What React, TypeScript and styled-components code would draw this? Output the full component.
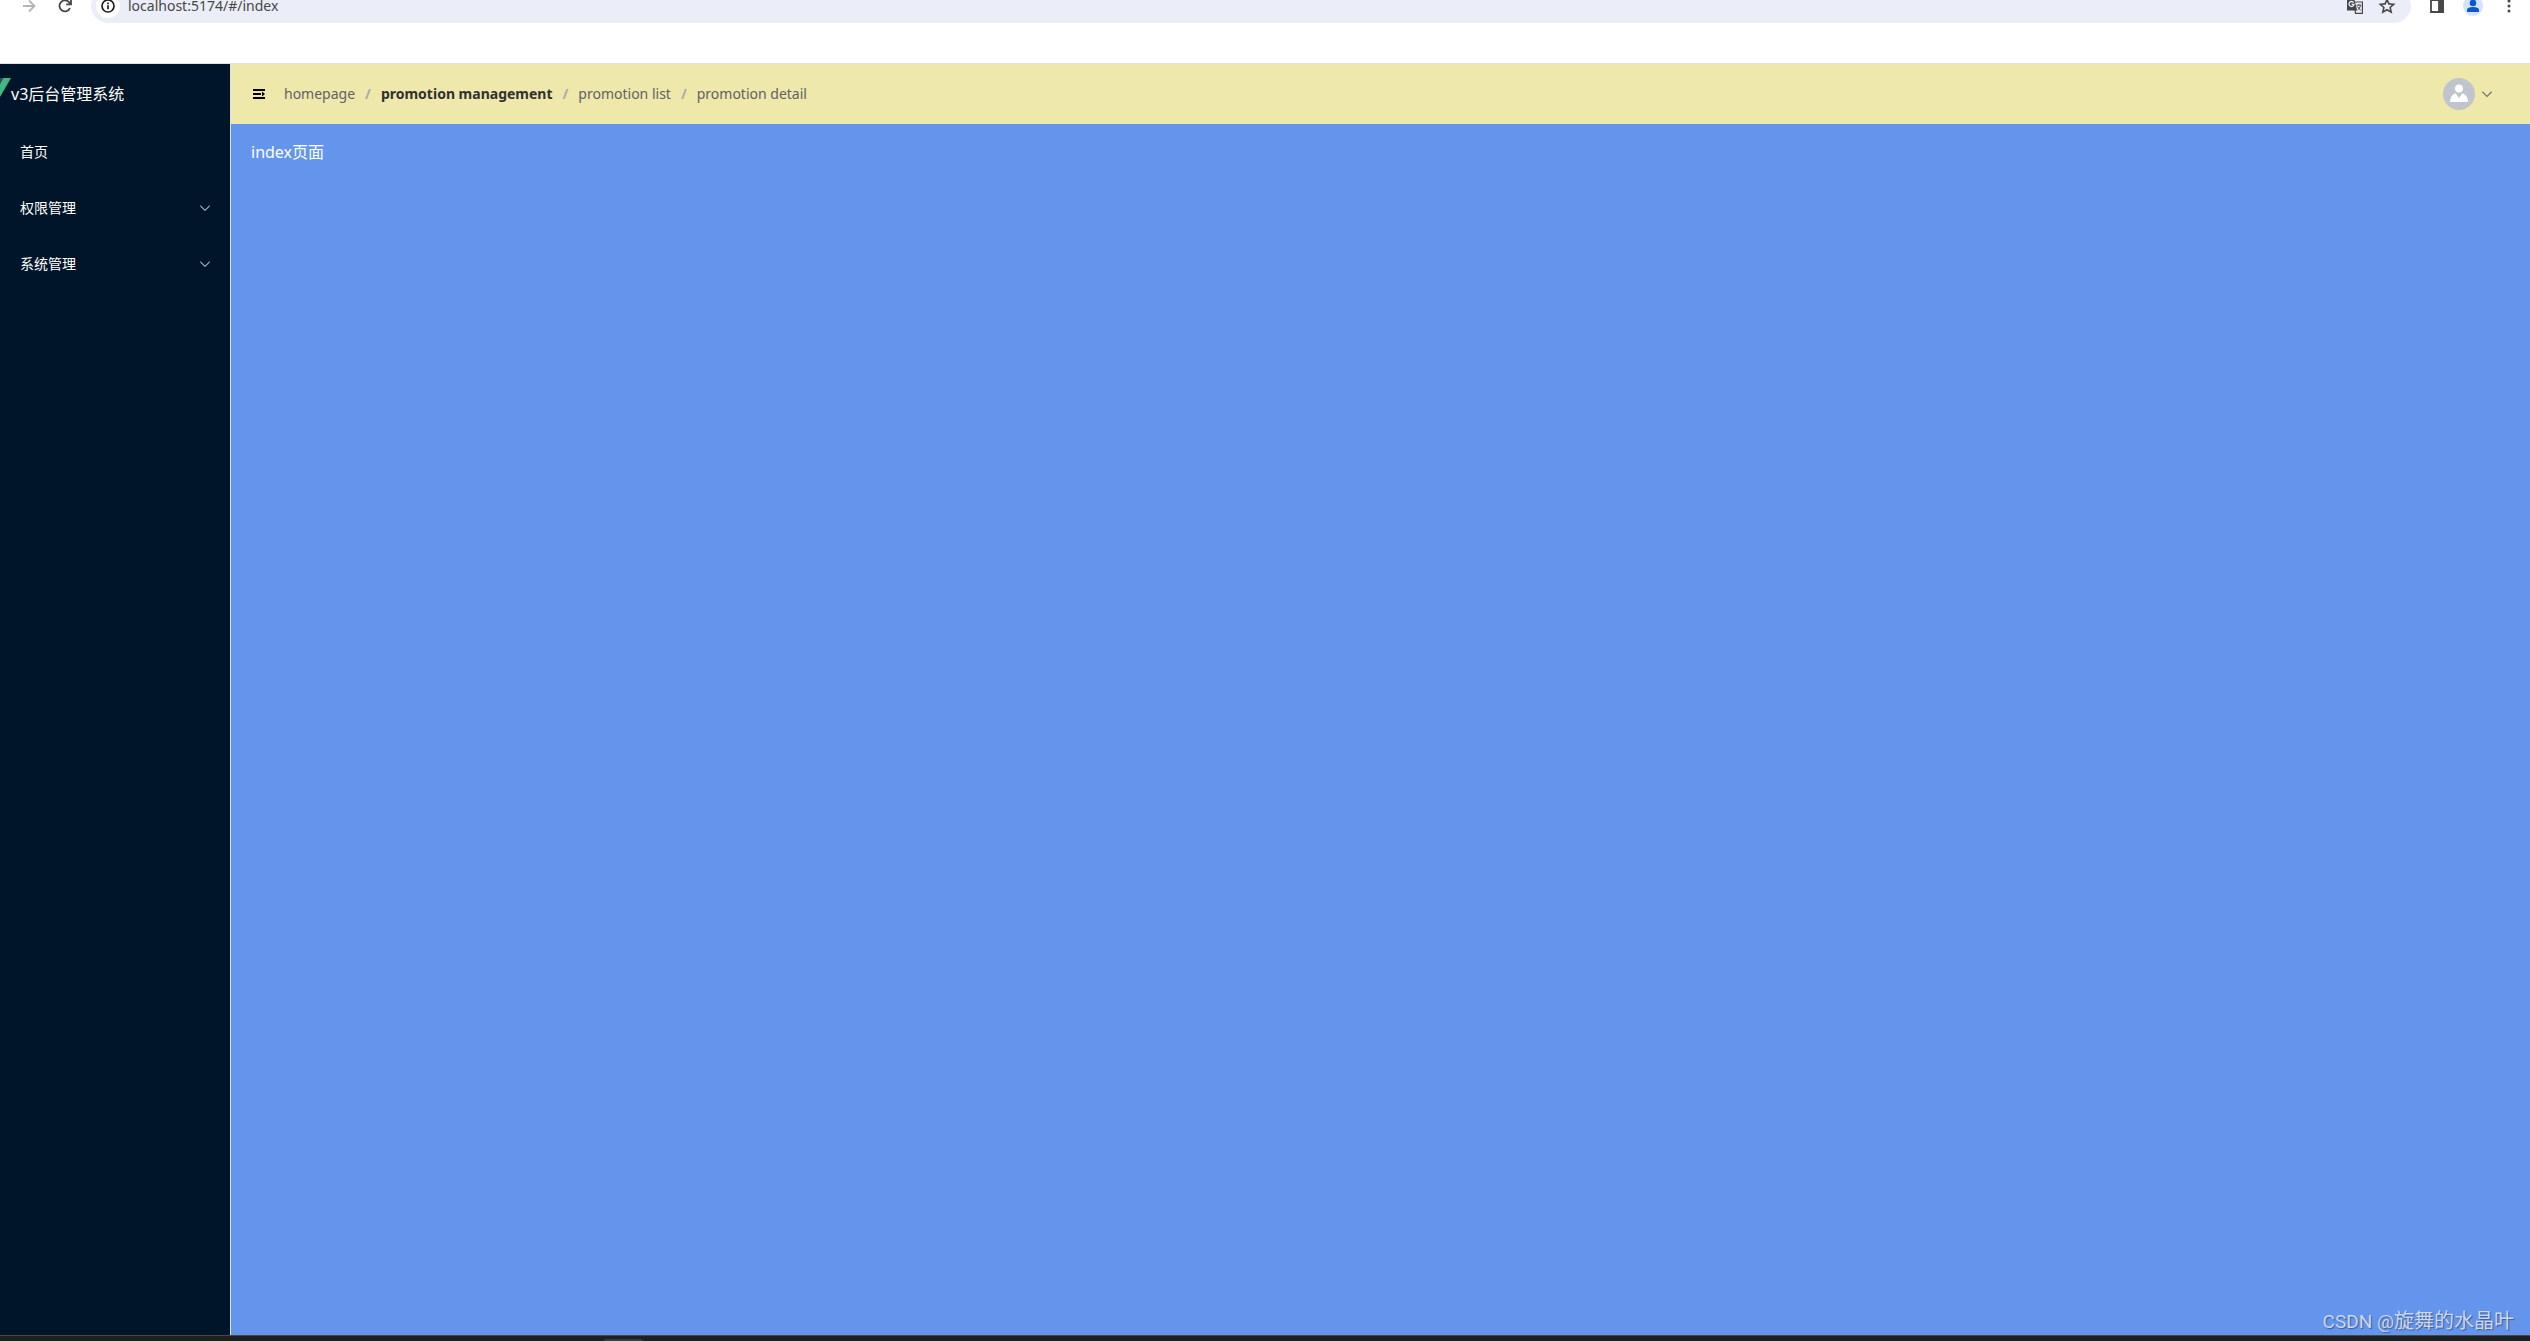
import React from 'react';
import styled, { createGlobalStyle } from 'styled-components';

const GlobalStyle = createGlobalStyle`
  * { box-sizing: border-box; }
  html, body, #root { height: 100%; }
  body {
    margin: 0;
    overflow: hidden;
    font-family: 'Noto Sans', 'Noto Sans CJK SC', sans-serif;
    font-size: 14px;
  }
  button {
    border: 0;
    padding: 0;
    background: none;
    color: inherit;
    font: inherit;
    cursor: pointer;
  }
  svg { display: block; flex: none; }
`;

const Screen = styled.div`
  display: flex;
  flex-direction: column;
  height: 100vh;
`;

const BrowserBar = styled.header`
  flex: none;
  padding-bottom: 40px;
  background: #fff;
  border-bottom: 1px solid #dfe1e8;
`;

const Toolbar = styled.div`
  display: flex;
  align-items: flex-end;
  height: 23px;
  padding: 0 3px 0 11px;
  overflow: hidden;
  color: #474747;
`;

const ToolButton = styled.button<{ $muted?: boolean }>`
  display: flex;
  flex: none;
  align-items: center;
  justify-content: center;
  width: 36px;
  height: 34px;
  color: ${(p) => (p.$muted ? '#b5b5b5' : '#474747')};
`;

const AddressBar = styled.div`
  display: flex;
  flex: 1;
  align-items: center;
  height: 34px;
  margin: 0 8px;
  padding: 0 8px 0 5px;
  border-radius: 17px;
  background: #ebeef8;
`;

const SiteInfo = styled.button`
  display: flex;
  flex: none;
  align-items: center;
  justify-content: center;
  width: 24px;
  height: 24px;
  border-radius: 50%;
  background: #fff;
  color: #1f1f1f;
`;

const Address = styled.input`
  flex: 1;
  min-width: 0;
  margin-left: 8px;
  padding: 0;
  border: 0;
  outline: 0;
  background: none;
  color: #474747;
  font: 14px/20px 'Noto Sans', sans-serif;
`;

const PillButton = styled(ToolButton)`
  width: 32px;
`;

const Profile = styled.span`
  display: flex;
  align-items: flex-end;
  justify-content: center;
  width: 20px;
  height: 20px;
  border-radius: 50%;
  background: #d3e3fd;
  color: #0b57d0;
`;

const Layout = styled.div`
  display: flex;
  flex: 1;
  min-height: 0;
`;

const Sidebar = styled.aside`
  flex: none;
  width: 231px;
  border-right: 1px solid #dcdfe6;
  background: #001529;
  color: #fff;
`;

const Brand = styled.div`
  display: flex;
  align-items: center;
  height: 60px;
  font-size: 16px;
`;

const Label = styled.span`
  padding-bottom: 2px;
`;

const MenuItem = styled.button`
  display: flex;
  align-items: center;
  justify-content: space-between;
  width: 100%;
  height: 56px;
  padding: 0 19px 0 20px;
`;

const Main = styled.div`
  display: flex;
  flex: 1;
  flex-direction: column;
  min-width: 0;
`;

const TopBar = styled.div`
  display: flex;
  align-items: center;
  height: 60px;
  padding: 0 37px 0 20px;
  background: #eee8aa;
`;

const Crumbs = styled.nav`
  display: flex;
  flex: 1;
  margin-left: 17px;
  padding-bottom: 2px;
`;

const Crumb = styled.span<{ $strong?: boolean }>`
  color: ${(p) => (p.$strong ? '#303133' : '#606266')};
  font-weight: ${(p) => (p.$strong ? 700 : 400)};
`;

const Slash = styled.span`
  margin: 0 10px;
  color: #a8abb2;
  font-weight: 700;
`;

const UserMenu = styled.button`
  display: flex;
  align-items: center;
  gap: 6px;
  color: #73767a;
`;

const Avatar = styled.span`
  display: flex;
  align-items: center;
  justify-content: center;
  width: 32px;
  height: 32px;
  border-radius: 50%;
  background: #c0c4cc;
  color: #fff;
`;

const Content = styled.main`
  display: flex;
  flex: 1;
  flex-direction: column;
  justify-content: space-between;
  padding: 16px 16px 0 20px;
  background: #6495ed;
  color: #fff;
  font-size: 16px;
  line-height: 24px;
`;

const Watermark = styled.div`
  align-self: flex-end;
  color: #cbd7ee;
  font: 20px/26px 'Noto Sans CJK SC', sans-serif;
  text-shadow: 1px 1px 1px #3c5a90;
`;

const WatermarkLatin = styled.span`
  font-family: Roboto, sans-serif;
  font-size: 19px;
`;

const Taskbar = styled.footer`
  display: flex;
  flex: none;
  align-items: flex-end;
  height: 6px;
  padding-left: 604px;
  border-top: 1px solid #484848;
  background: #202020;
`;

const TaskbarTab = styled.span`
  width: 39px;
  height: 2px;
  border-radius: 4px 4px 0 0;
  background: #3a3a3a;
`;

const Chevron = ({ weight }: { weight: number }) => (
  <svg width="12" height="12" viewBox="0 0 12 12" fill="none" stroke="currentColor" strokeWidth={weight}>
    <path d="M1.300 3.800 6 8.400l4.700-4.600" />
  </svg>
);

const menu = [
  { label: '首页', nested: false },
  { label: '权限管理', nested: true },
  { label: '系统管理', nested: true },
];

const crumbs = ['homepage', 'promotion management', 'promotion list', 'promotion detail'];

export default function App() {
  return (
    <Screen>
      <GlobalStyle />
      <BrowserBar>
        <Toolbar>
          <ToolButton $muted aria-label="Forward">
            <svg width="16" height="16" viewBox="0 0 16 16" fill="none" stroke="currentColor" strokeWidth="1.8">
              <path d="M2 8h11M8 2.5 13.5 8 8 13.5" />
            </svg>
          </ToolButton>
          <ToolButton aria-label="Reload">
            <svg width="16" height="16" viewBox="0 0 16 16" fill="none" stroke="currentColor" strokeWidth="1.8">
              <path d="M13 10.2A5.5 5.5 0 1 1 12.3 4.5L13.8 6" />
              <path d="M14 1.5V6.3H9.2" />
            </svg>
          </ToolButton>
          <AddressBar>
            <SiteInfo aria-label="Site information">
              <svg width="16" height="16" viewBox="0 0 16 16" fill="none" stroke="currentColor" strokeWidth="1.7">
                <circle cx="8" cy="8" r="6" />
                <path d="M8 7.2v4M8 4.6v1.6" />
              </svg>
            </SiteInfo>
            <Address aria-label="Address" defaultValue="localhost:5174/#/index" />
            <PillButton aria-label="Translate">
              <svg width="18" height="18" viewBox="0 0 18 18">
                <path fill="#ebeef8" stroke="currentColor" strokeWidth="1.200" d="M8 5h8.400v11.400H9.500z" />
                <path fill="currentColor" d="M1 1h7l3.200 12.500H1z" />
                <path d="M7.600 5.600A2.500 2.500 0 1 0 8 7.400H5.600" fill="none" stroke="#ebeef8" strokeWidth="1.300" />
                <path d="M10.500 8.200h4.800M12.800 7v1.200M14.400 8.500c-.4 2-1.300 3.300-2.800 4.500M11.500 9.500c.6 1.400 1.700 2.500 3.200 3.500" fill="none" stroke="currentColor" />
              </svg>
            </PillButton>
            <PillButton aria-label="Bookmark">
              <svg width="18" height="18" viewBox="0 0 18 18" fill="none" stroke="currentColor" strokeWidth="1.6">
                <path d="m9 2.500 1.900 4.400 4.800.4-3.600 3.200 1.100 4.700L9 12.700l-4.200 2.500 1.100-4.700-3.600-3.200 4.800-.4z" />
              </svg>
            </PillButton>
          </AddressBar>
          <ToolButton aria-label="Side panel">
            <svg width="16" height="16" viewBox="0 0 16 16" fill="none" stroke="currentColor" strokeWidth="1.8">
              <path d="M2 2h12v12H2z" />
              <path d="M10 2h4v12h-4z" fill="currentColor" />
            </svg>
          </ToolButton>
          <ToolButton aria-label="Profile">
            <Profile>
              <svg width="20" height="20" viewBox="0 0 20 20" fill="currentColor">
                <circle cx="10" cy="7" r="3.300" />
                <path d="M4 16v-2c0-2.200 3.500-3 6-3s6 .8 6 3v2z" />
              </svg>
            </Profile>
          </ToolButton>
          <ToolButton aria-label="Menu">
            <svg width="16" height="16" viewBox="0 0 16 16" fill="currentColor">
              <circle cx="8" cy="3" r="1.500" />
              <circle cx="8" cy="8" r="1.500" />
              <circle cx="8" cy="13" r="1.500" />
            </svg>
          </ToolButton>
        </Toolbar>
      </BrowserBar>
      <Layout>
        <Sidebar>
          <Brand>
            <svg width="11" height="32" viewBox="180 0 76 221">
              <path fill="#41b883" d="M204.800 0H256L128 220.800 0 0h97.920L128 51.200 157.440 0z" />
              <path fill="#35495e" d="M50.560 0 128 133.120 204.800 0h-47.360L128 51.200 97.920 0z" />
            </svg>
            <Label>v3后台管理系统</Label>
          </Brand>
          <nav aria-label="Main">
            {menu.map((item) => (
              <MenuItem key={item.label}>
                <Label>{item.label}</Label>
                {item.nested && <Chevron weight={1} />}
              </MenuItem>
            ))}
          </nav>
        </Sidebar>
        <Main>
          <TopBar>
            <button aria-label="Toggle menu">
              <svg width="16" height="16" viewBox="0 0 16 16" fill="#000">
                <path d="M2 3h12v2H2zM2 7h8v2H2zM2 11h12v2H2zM11 5.500 14 8l-3 2.500z" />
              </svg>
            </button>
            <Crumbs aria-label="Breadcrumb">
              {crumbs.map((label, i) => (
                <React.Fragment key={label}>
                  {i > 0 && <Slash>/</Slash>}
                  <Crumb $strong={i === 1}>{label}</Crumb>
                </React.Fragment>
              ))}
            </Crumbs>
            <UserMenu aria-label="User menu">
              <Avatar>
                <svg width="20" height="20" viewBox="0 0 20 20" fill="currentColor">
                  <circle cx="10" cy="4.500" r="4" />
                  <path d="M1 18c0-4.500 2-7.500 5.500-8.800L10 14l3.500-4.800C17 10.500 19 13.500 19 18z" />
                </svg>
              </Avatar>
              <Chevron weight={1.2} />
            </UserMenu>
          </TopBar>
          <Content>
            <div>index页面</div>
            <Watermark>
              <WatermarkLatin>CSDN @</WatermarkLatin>旋舞的水晶叶
            </Watermark>
          </Content>
        </Main>
      </Layout>
      <Taskbar>
        <TaskbarTab />
      </Taskbar>
    </Screen>
  );
}
